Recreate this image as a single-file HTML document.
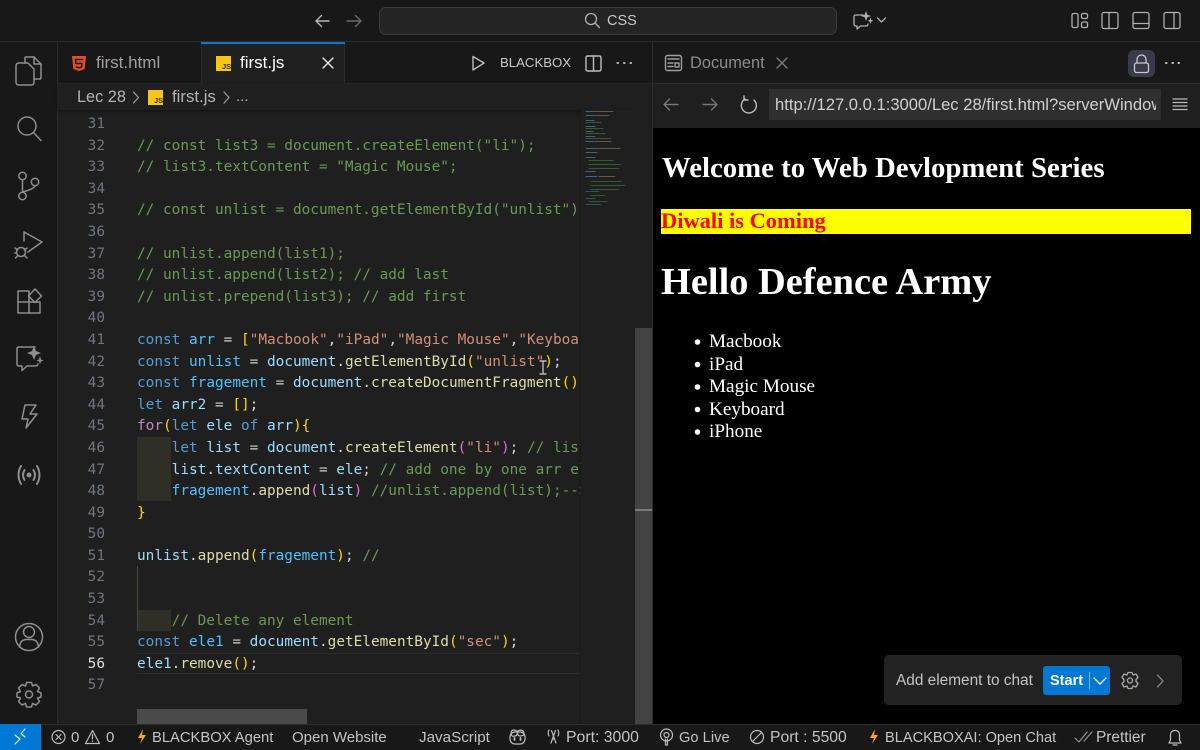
<!DOCTYPE html>
<html><head><meta charset="utf-8"><style>
html,body{margin:0;padding:0;background:#1f1f1f}
body{width:1200px;height:750px;overflow:hidden;position:relative;font-family:"Liberation Sans",sans-serif;color:#ccc}
.a{position:absolute}
.t{position:absolute;white-space:nowrap;line-height:20px;font-size:15px}
svg{position:absolute;overflow:visible;fill:none;stroke-linecap:round;stroke-linejoin:round}
#code{position:absolute;left:137px;top:114px;width:444px;height:596px;overflow:hidden;font-family:"DejaVu Sans Mono",monospace;font-size:14.4px;line-height:21.6px;white-space:pre;color:#9cdcfe}
#nums{position:absolute;left:60px;top:114px;width:45px;text-align:right;white-space:pre;font-family:"DejaVu Sans Mono",monospace;font-size:14.4px;line-height:21.6px;color:#6e7681}
.c{color:#6a9955}.k{color:#569cd6}.s{color:#ce9178}.f{color:#dcdcaa}.w{color:#d4d4d4}.y{color:#ffd700}.p{color:#da70d6}.o{color:#c586c0}.v{color:#4fc1ff}
.st{position:absolute;top:728px;font-size:15px;line-height:20px;color:#c4c4c4;white-space:nowrap}
</style></head><body>
<!-- title bar -->
<div class="a" style="left:0;top:0;width:1200px;height:41px;background:#181818;border-bottom:1px solid #2b2b2b"></div>
<svg style="left:0;top:0" width="1200" height="42" stroke="#b8b8b8" stroke-width="1.4">
<path d="M329 21H316M321.500 15.500L316 21L321.500 26.500"/>
<path d="M347 21H361M355.500 15.500L361 21L355.500 26.500" stroke="#6c6c6c"/>
</svg>
<div class="a" style="left:379px;top:7px;width:456px;height:26px;background:#242424;border:1px solid #3a3a3a;border-radius:7px"></div>
<svg style="left:0;top:0" width="1200" height="42" stroke="#b0b0b0" stroke-width="1.3">
<circle cx="591" cy="19" r="5.500"/><path d="M595 23L599.500 27.500"/>
<path d="M863 15H856Q854 15 854 17V24Q854 26 856 26H857V29L860.500 26H866Q868 26 868 24"/>
<path d="M866 11L867.300 14.700L871 16L867.300 17.300L866 21L864.700 17.300L861 16L864.700 14.700Z" fill="#b0b0b0" stroke="none"/>
<path d="M870.500 17.500L871.300 20L873.500 20.800L871.300 21.600L870.500 24L869.700 21.600L867.500 20.800L869.700 20Z" fill="#b0b0b0" stroke="none"/>
<path d="M877.500 18L881.500 22L885.500 18"/>
<rect x="1072" y="13.500" width="6" height="14" rx="1.500"/><rect x="1081.500" y="13.500" width="6" height="5" rx="1.500"/><rect x="1081.500" y="22" width="6" height="5.500" rx="1.500"/>
<rect x="1102" y="12.500" width="16" height="16" rx="2"/><path d="M1109 12.500V28.500"/>
<rect x="1133" y="12.500" width="16" height="16" rx="2"/><path d="M1133 23.500H1149"/>
<rect x="1164" y="12.500" width="16" height="16" rx="2"/><path d="M1174 12.500V28.500"/>
</svg>
<div class="t" style="left:607px;top:11px;font-size:14.500px;color:#c8c8c8">CSS</div>

<!-- activity bar -->
<div class="a" style="left:0;top:42px;width:57px;height:682px;background:#181818;border-right:1px solid #2b2b2b"></div>
<svg style="left:0;top:0" width="57" height="724" stroke="#8e8e8e" stroke-width="1.500">
<path d="M25 63V58Q25 57 26 57H34L41 64V78Q41 79 40 79H34"/><path d="M34 57V64H41"/><path d="M25 63H19Q16 63 16 66V82Q16 85 19 85H31Q34 85 34 82V69L28 63Z"/>
<circle cx="27" cy="126" r="9"/><path d="M33.500 132.500L41 140.500"/>
<circle cx="22.500" cy="176" r="3.700"/><circle cx="22.500" cy="196" r="3.700"/><circle cx="35" cy="182" r="3.700"/><path d="M22.500 180V192M35 186Q34 189 22.500 192"/>
<path d="M24 232L42 242L28 252"/><path d="M24 232V241"/><circle cx="21" cy="252" r="4.500"/><path d="M15 248L17.500 250M15 253H16.500M15.500 258L18 255.500M27 248L24.500 250M27 258L24.500 255.500"/>
<path d="M18 291V313H40V302H18M29 302V313M29 302V291H18"/><path d="M35 289L41.500 296L35 302.500L28.500 296Z"/>
<path d="M35 347H19Q17 347 17 349V364Q17 366 19 366H22V370.500L27 366H35Q37 366 38 364"/>
<path d="M34 346L36 351L41 353L36 355L34 360L32 355L27 353L32 351Z" fill="#8e8e8e" stroke="none"/><path d="M40 356L41 359.500L43.500 360.500L41 361.500L40 364L39 361.500L36.500 360.500L39 359.500Z" fill="#8e8e8e" stroke="none"/>
<path d="M36 405L25 405L22 419H28L26 428L37 414H30Z"/>
<path d="M21 466Q16 475 21 484M37 466Q42 475 37 484" stroke-width="2"/><path d="M24.500 470Q21.500 475 24.500 480M33.500 470Q36.500 475 33.500 480" stroke-width="2"/><circle cx="29" cy="475" r="2.500" fill="#8e8e8e" stroke="none"/>
<circle cx="29" cy="637" r="13.500"/><circle cx="29" cy="632" r="5.500"/><path d="M19.500 647Q20 640 26 639.500H32Q38 640 38.500 647"/>
<circle cx="29" cy="694.500" r="3.500"/>
<path d="M26.500 682.500H31.500L32.500 686L36 684.500L39.500 688L37.500 691.500L41 693V697L37.500 698L39.500 701.500L36 705L32.500 703.500L31.500 707H26.500L25.500 703.500L22 705L18.500 701.500L20.500 698L17 697V693L20.500 691.500L18.500 688L22 684.500L25.500 686Z"/>
</svg>

<!-- tab bar -->
<div class="a" style="left:58px;top:42px;width:594px;height:41px;background:#181818;border-bottom:1px solid #2b2b2b"></div>
<div class="a" style="left:201px;top:42px;width:144px;height:42px;background:#1f1f1f;border-left:1px solid #2b2b2b;border-right:1px solid #2b2b2b;box-sizing:border-box"></div>
<div class="a" style="left:201px;top:42px;width:144px;height:2px;background:#0078d4"></div>
<svg style="left:71px;top:55px" width="16" height="17"><path d="M1 1H15L13.700 14L8 16L2.300 14Z" fill="#e44d26"/><path d="M11.500 4.500H4.500L4.900 8.500H11L10.600 12L8 12.800L5.400 12" stroke="#1a1a1a" stroke-width="1.500"/></svg>
<div class="t" style="left:96px;top:53px;font-size:17px;color:#a0a0a0">first.html</div>
<div class="a" style="left:216px;top:56px;width:15px;height:15px;background:#f5c518"></div>
<div class="t" style="left:222px;top:62px;font-size:7.500px;line-height:9px;font-weight:bold;color:#3a3000">JS</div>
<div class="t" style="left:240px;top:53px;font-size:17px;color:#fff">first.js</div>
<svg style="left:323px;top:58px" width="10" height="10" stroke="#e8e8e8" stroke-width="1.400"><path d="M0 0L10 10M10 0L0 10"/></svg>
<svg style="left:0;top:0" width="652" height="84" stroke="#bdbdbd" stroke-width="1.400">
<path d="M473 56.500L484 63L473 70Z"/>
<rect x="586" y="56" width="15" height="15" rx="1.500"/><path d="M593.500 56V71"/>
<path d="M617.500 63H618M624 63H624.500M630.500 63H631" stroke-width="2"/>
</svg>
<div class="t" style="left:500px;top:53px;font-size:13.200px;color:#c8c8c8">BLACKBOX</div>

<!-- breadcrumbs -->
<div class="a" style="left:58px;top:84px;width:594px;height:26px;background:#1f1f1f;box-shadow:0 1px 3px #111"></div>
<div class="t" style="left:77px;top:87px;font-size:16.300px;color:#b4b4b4">Lec 28</div>
<svg style="left:0;top:0" width="260" height="110" stroke="#9a9a9a" stroke-width="1.300"><path d="M133.500 92L138.500 97.500L133.500 103"/><path d="M224 92L229 97.500L224 103"/></svg>
<div class="a" style="left:148px;top:90px;width:15px;height:15px;background:#f5c518"></div>
<div class="t" style="left:154px;top:96px;font-size:7.500px;line-height:9px;font-weight:bold;color:#3a3000">JS</div>
<div class="t" style="left:172px;top:87px;font-size:16.800px;color:#b4b4b4">first.js</div>
<div class="t" style="left:236px;top:87px;font-size:15px;color:#b4b4b4">...</div>

<!-- editor -->
<div class="a" style="left:137px;top:653px;width:444px;height:21px;box-sizing:border-box;border-top:1px solid #2c2c2c;border-bottom:1px solid #2c2c2c"></div>
<div class="a" style="left:137px;top:437px;width:34px;height:64px;background:#2f2f27"></div>
<div class="a" style="left:137px;top:610px;width:34px;height:21px;background:#2f2f27"></div>
<div class="a" style="left:137px;top:566px;width:1px;height:65px;background:#4a4a38"></div>
<div id="nums">31
32
33
34
35
36
37
38
39
40
41
42
43
44
45
46
47
48
49
50
51
52
53
54
55
<span style="color:#ddd">56</span>
57</div>
<div id="code">
<span class="c">// const list3 = document.createElement("li");</span>
<span class="c">// list3.textContent = "Magic Mouse";</span>

<span class="c">// const unlist = document.getElementById("unlist");</span>

<span class="c">// unlist.append(list1);</span>
<span class="c">// unlist.append(list2); // add last</span>
<span class="c">// unlist.prepend(list3); // add first</span>

<span class="k">const</span> <span class="v">arr</span> <span class="w">=</span> <span class="y">[</span><span class="s">"Macbook"</span><span class="w">,</span><span class="s">"iPad"</span><span class="w">,</span><span class="s">"Magic Mouse"</span><span class="w">,</span><span class="s">"Keyboard"</span>
<span class="k">const</span> <span class="v">unlist</span> <span class="w">=</span> document<span class="w">.</span><span class="f">getElementById</span><span class="y">(</span><span class="s">"unlist"</span><span class="y">)</span><span class="w">;</span>
<span class="k">const</span> <span class="v">fragement</span> <span class="w">=</span> document<span class="w">.</span><span class="f">createDocumentFragment</span><span class="y">()</span><span class="w">;</span>
<span class="k">let</span> arr2 <span class="w">=</span> <span class="y">[]</span><span class="w">;</span>
<span class="o">for</span><span class="y">(</span><span class="k">let</span> ele <span class="k">of</span> arr<span class="y">){</span>
    <span class="k">let</span> list <span class="w">=</span> document<span class="w">.</span><span class="f">createElement</span><span class="p">(</span><span class="s">"li"</span><span class="p">)</span><span class="w">;</span> <span class="c">// list</span>
    list<span class="w">.</span>textContent <span class="w">=</span> ele<span class="w">;</span> <span class="c">// add one by one arr el</span>
    <span class="v">fragement</span><span class="w">.</span><span class="f">append</span><span class="p">(</span>list<span class="p">)</span> <span class="c">//unlist.append(list);--></span>
<span class="y">}</span>

unlist<span class="w">.</span><span class="f">append</span><span class="y">(</span><span class="v">fragement</span><span class="y">)</span><span class="w">;</span> <span class="c">//</span>


    <span class="c">// Delete any element</span>
<span class="k">const</span> <span class="v">ele1</span> <span class="w">=</span> document<span class="w">.</span><span class="f">getElementById</span><span class="y">(</span><span class="s">"sec"</span><span class="y">)</span><span class="w">;</span>
ele1<span class="w">.</span><span class="f">remove</span><span class="y">()</span><span class="w">;</span></div>
<svg style="left:538px;top:360px" width="10" height="16" stroke="#bbb" stroke-width="1.400"><path d="M2 1H8M5 1V14M2 14H8"/></svg>
<!-- h scroll -->
<div class="a" style="left:137px;top:709px;width:170px;height:15px;background:#4a4a4a"></div>
<!-- minimap -->
<div class="a" style="left:581px;top:110px;width:54px;height:614px;background:#1f1f1f;box-shadow:-1px 0 2px #191919"></div>
<svg style="left:585px;top:111px;opacity:.75" width="50" height="95" stroke-width="1">
<g stroke="#4d7a9c"><path d="M1 .5H8M1 4.500H10M1 9.500H9M1 15.500H10M1 20.500H8M1 25.500H10M1 30.500H9M1 37.500H12M1 41.500H12M1 46.500H10M1 60.500H10M1 65.500H12"/></g>
<g stroke="#7f6a50"><path d="M9 .5H28M11 4.500H24M10 30.500H26M13 37.500H35M14 65.500H30"/></g>
<g stroke="#46683a"><path d="M1 11.500H16M1 17.500H18M1 22.500H20M1 27.500H26M4 49.500H28M4 53.500H36M4 57.500H34M6 70.500H36M6 74.500H40M6 78.500H34M6 84.500H20M4 90.500H22"/></g>
<g stroke="#3b5f74"><path d="M1 80.500H14M1 87.500H10M1 93.500H16"/></g>
</svg>
<!-- scrollbar -->
<div class="a" style="left:635px;top:110px;width:17px;height:614px;background:#1f1f1f"></div>
<div class="a" style="left:635px;top:328px;width:17px;height:396px;background:#434343"></div>
<div class="a" style="left:635px;top:509px;width:17px;height:2px;background:#7a7a7a"></div>
<div class="a" style="left:652px;top:42px;width:1px;height:682px;background:#2b2b2b"></div>

<!-- browser -->
<div class="a" style="left:653px;top:42px;width:547px;height:41px;background:#181818;border-bottom:1px solid #2b2b2b"></div>
<div class="a" style="left:653px;top:84px;width:547px;height:44px;background:#1f1f1f"></div>
<svg style="left:0;top:0" width="1200" height="128" stroke="#9e9e9e" stroke-width="1.400">
<rect x="665.500" y="55.500" width="16" height="15" rx="2"/><path d="M668 59H679M668 63H673M668 66.500H673"/><rect x="675" y="63" width="4" height="4"/>
<path d="M777 58L787 68M787 58L777 68" stroke="#7a7a7a"/>
<path d="M664 104.500H678M669.500 99L664 104.500L669.500 110" stroke="#777"/>
<path d="M703 104.500H717M711.500 99L717 104.500L711.500 110" stroke="#777"/>
<path d="M745 99A7.500 7.500 0 1 0 754 100M744 96V100H748" stroke="#bbb"/>
<path d="M1173 99H1187M1173 102.500H1187M1173 106H1187M1173 109.500H1187" stroke="#bbb" stroke-width="1.200"/>
<path d="M1166 63H1166.500M1172.500 63H1173M1178.500 63H1179" stroke="#ccc" stroke-width="2"/>
</svg>
<div class="t" style="left:690px;top:53px;font-size:16.400px;color:#8c8c8c">Document</div>
<div class="a" style="left:1128px;top:50px;width:27px;height:27px;background:#3a3b4a;border-radius:6px"></div>
<svg style="left:1128px;top:50px" width="27" height="27" stroke="#c8c8d4" stroke-width="1.300"><rect x="6.500" y="13" width="14" height="9.500" rx="2"/><path d="M9 13V9.500A4.500 4.500 0 0 1 18 9.500V13"/></svg>
<div class="a" style="left:769px;top:89px;width:392px;height:31px;background:#2f2f2f"><div class="a" style="left:6px;top:0;width:381px;height:31px;overflow:hidden"><div class="t" style="left:0;top:6px;font-size:16.600px;color:#d0d0d0">http://127.0.0.1:3000/Lec 28/first.html?serverWindowId=1</div></div></div>

<div class="a" style="left:653px;top:128px;width:547px;height:596px;background:#000;overflow:hidden;font-family:'Liberation Serif',serif;color:#fff">
<div class="t" style="left:9px;top:22px;font-size:28.800px;line-height:37px;font-weight:bold">Welcome to Web Devlopment Series</div>
<div class="a" style="left:8px;top:81px;width:530px;height:25px;background:#ff0"></div>
<div class="t" style="left:8px;top:80px;font-size:22.460px;line-height:26px;font-weight:bold;color:#f00">Diwali is Coming</div>
<div class="t" style="left:8px;top:131px;font-size:38.400px;line-height:46px;font-weight:bold">Hello Defence Army</div>
<div class="a" style="left:56px;top:203px;font-size:19.200px;line-height:22.500px;white-space:nowrap">Macbook<br>iPad<br>Magic Mouse<br>Keyboard<br>iPhone</div>
<svg style="left:0;top:0" width="60" height="320"><g fill="#fff"><circle cx="44.500" cy="214" r="2.800"/><circle cx="44.500" cy="236.500" r="2.800"/><circle cx="44.500" cy="259" r="2.800"/><circle cx="44.500" cy="281.500" r="2.800"/><circle cx="44.500" cy="304" r="2.800"/></g></svg>
</div>

<!-- add element -->
<div class="a" style="left:884px;top:655px;width:298px;height:50px;background:#222;border-radius:5px"></div>
<div class="t" style="left:896px;top:671px;font-size:15.400px;color:#c4c4c4">Add element to chat</div>
<div class="a" style="left:1043px;top:666px;width:67px;height:29px;background:#0078d4;border-radius:3px"></div>
<div class="a" style="left:1089px;top:672px;width:1px;height:17px;background:#7fb8e8"></div>
<div class="t" style="left:1050px;top:671px;font-size:14.500px;font-weight:bold;color:#fff">Start</div>
<svg style="left:0;top:0" width="1200" height="750" stroke="#a8a8a8" stroke-width="1.300">
<path d="M1094 678L1100 684L1106 678" stroke="#fff"/>
<circle cx="1130" cy="680.500" r="2.500"/><path d="M1128 672.500H1132L1133 675L1136 674L1138 677.500L1136 679.500V681.500L1138 683.500L1136 687L1133 686L1132 688.500H1128L1127 686L1124 687L1122 683.500L1124 681.500V679.500L1122 677.500L1124 674L1127 675Z"/>
<path d="M1157.500 675L1163 681L1157.500 687" stroke="#808080"/>
</svg>

<!-- status bar -->
<div class="a" style="left:0;top:724px;width:1200px;height:26px;background:#181818;border-top:1px solid #2e2e2e;box-sizing:border-box"></div>
<div class="a" style="left:0;top:724px;width:41px;height:26px;background:#0078d4"></div>
<svg style="left:0;top:724px" width="1200" height="26" stroke="#bdbdbd" stroke-width="1.200">
<path d="M15 11L20 15L15 20M25 5L21 9.500L25 13" stroke="#dcecfa"/>
<circle cx="58.500" cy="13" r="6.500"/><path d="M56 10.500L61 15.500M61 10.500L56 15.500"/>
<path d="M92.500 6.500L99.500 19.500H85.500Z"/><path d="M92.500 10.500V15M92.500 17V17.300"/>
<path d="M143 5L138 14H142L140 20L146 11H142Z" fill="#f5a623" stroke="none"/>
<rect x="510" y="8" width="15" height="12" rx="5"/><path d="M514 6Q511 6 511 9.500T515 12Q517 12 517.500 9Q518 12 520 12Q524 12 524 9.500T521 6Q518.500 6 517.500 8Q516.500 6 514 6Z"/><path d="M514.500 14V16M520.500 14V16" stroke-width="1.800"/>
<path d="M551.500 6.500L556 19M555.500 6.500L551 19M552.500 15H554.500M549 6Q547.500 9 549 12M558 6Q559.500 9 558 12"/>
<circle cx="666.500" cy="11" r="6"/><circle cx="666.500" cy="11" r="2.500"/><path d="M665.500 15V21H667.500V15"/>
<circle cx="757" cy="13" r="6.500"/><path d="M752.500 17.500L761.500 8.500"/>
<path d="M875 5L870 14H874L872 20L878 11H874Z" fill="#f5a623" stroke="none"/>
<path d="M1075 14L1079 18L1087 8M1084 17L1092 8" stroke="#909090"/>
<path d="M1169 19H1181L1179.500 16V11Q1179.500 6.500 1175 6.500T1170.500 11V16ZM1173 21H1177"/>
</svg>
<div class="st" style="left:71px">0</div>
<div class="st" style="left:106px">0</div>
<div class="st" style="left:152px;font-size:14.750px">BLACKBOX Agent</div>
<div class="st" style="left:292px">Open Website</div>
<div class="st" style="left:419px;font-size:15.200px">JavaScript</div>
<div class="st" style="left:566px;font-size:15.800px">Port: 3000</div>
<div class="st" style="left:679px;font-size:14.700px">Go Live</div>
<div class="st" style="left:770px;font-size:15.700px">Port : 5500</div>
<div class="st" style="left:885px;font-size:14.600px">BLACKBOXAI: Open Chat</div>
<div class="st" style="left:1096px;font-size:15.400px">Prettier</div>
</body></html>
